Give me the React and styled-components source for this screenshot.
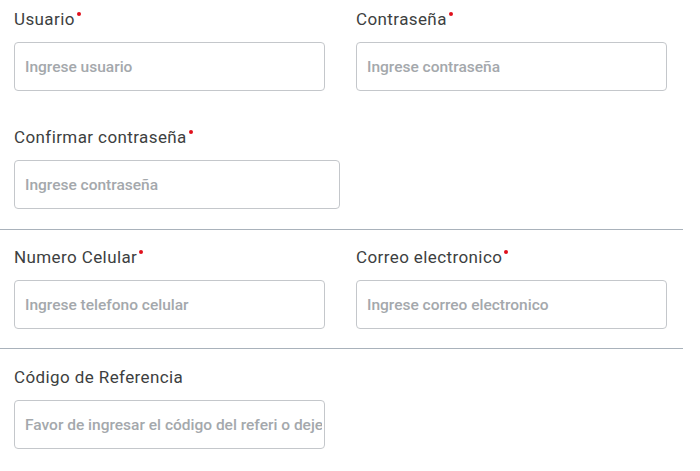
import React from "react";
import styled, { createGlobalStyle } from "styled-components";

const Global = createGlobalStyle`
  html, body { margin: 0; padding: 0; background: #fff; }
  body { font-family: Roboto, "Noto Sans", sans-serif; }
  * { box-sizing: border-box; }
`;

const Page = styled.div`
  width: 700px;
  padding-top: 7px;
`;

const Section = styled.div`
  padding: ${(p) => p.$pt || 0}px 0 ${(p) => p.$pb ?? 20}px 14px;
  width: 683px;
  border-bottom: ${(p) => (p.$divider ? "1px solid #a9b2bb" : "none")};
`;

const Row = styled.div`
  display: grid;
  grid-template-columns: 311px 311px;
  column-gap: 31px;
  margin-top: ${(p) => p.$mt || 0}px;
`;

const Field = styled.div`
  display: flex;
  flex-direction: column;
  width: ${(p) => p.$w || 311}px;
`;

const Label = styled.label`
  font-size: 17px;
  line-height: 24px;
  letter-spacing: 0.4px;
  color: #3d3f41;
  display: inline-flex;
  align-items: flex-start;
  margin-bottom: 11px;
`;

const Req = styled.span`
  width: 4px;
  height: 4px;
  border-radius: 50%;
  background: #e0101c;
  margin-left: 2px;
  margin-top: 5px;
`;

const Input = styled.input`
  height: 49px;
  width: 100%;
  border: 1px solid #c4c7cb;
  border-radius: 4px;
  padding: 0 2px 0 10px;
  font-family: Roboto, sans-serif;
  font-size: 15.5px;
  font-weight: 500;
  color: #333;
  outline: none;
  &::placeholder {
    color: #a4a8ac;
  }
`;

function F({ label, req, ph, w }) {
  return (
    <Field $w={w}>
      <Label>
        {label}
        {req && <Req />}
      </Label>
      <Input placeholder={ph} />
    </Field>
  );
}

export default function App() {
  return (
    <Page>
      <Global />
      <Section $divider>
        <Row>
          <F label="Usuario" req ph="Ingrese usuario" />
          <F label="Contraseña" req ph="Ingrese contraseña" />
        </Row>
        <Row $mt={34}>
          <F label="Confirmar contraseña" req ph="Ingrese contraseña" w={326} />
        </Row>
      </Section>
      <Section $divider $pt={15} $pb={19}>
        <Row>
          <F label="Numero Celular" req ph="Ingrese telefono celular" />
          <F label="Correo electronico" req ph="Ingrese correo electronico" />
        </Row>
      </Section>
      <Section $pt={16}>
        <Row>
          <F
            label="Código de Referencia"
            ph="Favor de ingresar el código del referi o deje vacío"
          />
        </Row>
      </Section>
    </Page>
  );
}
